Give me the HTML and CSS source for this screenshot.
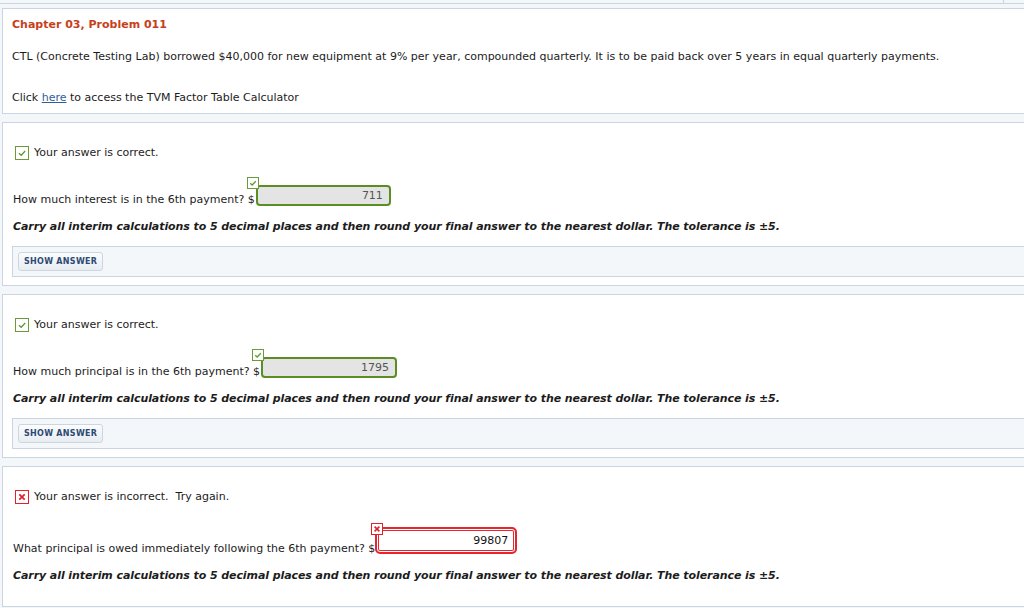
FILE: index.html
```html
<!DOCTYPE html>
<html>
<head>
<meta charset="utf-8">
<link rel="stylesheet" href="styles.css">
</head>
<body>
<div class="topbar"><span class="topbar-tab"></span></div>
<div class="page">
  <section class="box intro">
    <h1 class="title">Chapter 03, Problem 011</h1>
    <p class="problem">CTL (Concrete Testing Lab) borrowed $40,000 for new equipment at 9% per year, compounded quarterly. It is to be paid back over 5 years in equal quarterly payments.</p>
    <p class="calc">Click <a href="#" class="link">here</a> to access the TVM Factor Table Calculator</p>
  </section>

  <section class="box part">
    <div class="status">
      <span class="mark ok"><svg viewBox="0 0 14 14" width="14" height="14"><path d="M4 7.2 L6.2 9.3 L10.2 5" fill="none" stroke="#5e9a2c" stroke-width="1.3"/></svg></span>
      <span>Your answer is correct.</span>
    </div>
    <div class="question">
      <span>How much interest is in the 6th payment? $</span>
      <span class="field ok w1">
        <span class="badge ok"><svg viewBox="0 0 12 12" width="12" height="12"><path d="M3.2 6.2 L5.2 8 L8.8 4.3" fill="none" stroke="#5e9a2c" stroke-width="1.3"/></svg></span>
        <span class="value">711</span>
      </span>
    </div>
    <p class="note">Carry all interim calculations to 5 decimal places and then round your final answer to the nearest dollar. The tolerance is ±5.</p>
    <div class="answer-bar"><button class="show">SHOW ANSWER</button></div>
  </section>

  <section class="box part">
    <div class="status">
      <span class="mark ok"><svg viewBox="0 0 14 14" width="14" height="14"><path d="M4 7.2 L6.2 9.3 L10.2 5" fill="none" stroke="#5e9a2c" stroke-width="1.3"/></svg></span>
      <span>Your answer is correct.</span>
    </div>
    <div class="question">
      <span>How much principal is in the 6th payment? $</span>
      <span class="field ok w2">
        <span class="badge ok"><svg viewBox="0 0 12 12" width="12" height="12"><path d="M3.2 6.2 L5.2 8 L8.8 4.3" fill="none" stroke="#5e9a2c" stroke-width="1.3"/></svg></span>
        <span class="value">1795</span>
      </span>
    </div>
    <p class="note">Carry all interim calculations to 5 decimal places and then round your final answer to the nearest dollar. The tolerance is ±5.</p>
    <div class="answer-bar"><button class="show">SHOW ANSWER</button></div>
  </section>

  <section class="box part last">
    <div class="status">
      <span class="mark bad"><svg viewBox="0 0 14 14" width="14" height="14"><path d="M4.3 4.3 L9.7 9.7 M9.7 4.3 L4.3 9.7" fill="none" stroke="#e0232b" stroke-width="1.8"/></svg></span>
      <span>Your answer is incorrect.&nbsp; Try again.</span>
    </div>
    <div class="question">
      <span>What principal is owed immediately following the 6th payment? $</span>
      <span class="field bad w3">
        <span class="badge bad"><svg viewBox="0 0 12 12" width="12" height="12"><path d="M3.6 3.6 L8.4 8.4 M8.4 3.6 L3.6 8.4" fill="none" stroke="#e0232b" stroke-width="1.6"/></svg></span>
        <span class="value">99807</span>
      </span>
    </div>
    <p class="note">Carry all interim calculations to 5 decimal places and then round your final answer to the nearest dollar. The tolerance is ±5.</p>
  </section>
</div>
</body>
</html>
```

FILE: styles.css
```css
html, body {
  margin: 0;
  padding: 0;
}
body {
  background: #f4f7fa;
  font-family: Verdana, "DejaVu Sans", sans-serif;
  font-size: 11px;
  line-height: 14px;
  color: #1c1c1c;
  overflow: hidden;
  width: 1024px;
  height: 608px;
}
.topbar {
  height: 3px;
  border-bottom: 1px solid #c9d5e3;
  position: relative;
}
.topbar-tab {
  position: absolute;
  left: 1003px;
  top: 0;
  width: 0;
  height: 3px;
  border-left: 1px solid #c9d5e3;
}
.page {
  display: flex;
  flex-direction: column;
  gap: 8px;
  padding: 4px 0 0 2px;
}
.box {
  background: #fff;
  border: 1px solid #c9d5e3;
  width: 1040px;
  box-sizing: border-box;
  padding: 0 0 0 9px;
}
.intro {
  padding-top: 9px;
  padding-bottom: 8px;
}
.title {
  margin: 0;
  font-size: 11px;
  line-height: 14px;
  font-weight: bold;
  color: #c8401a;
}
.problem {
  margin: 18px 0 0;
}
.calc {
  margin: 27px 0 0;
}
.link {
  color: #2f5f98;
  text-decoration: underline;
}
.part {
  padding-top: 23px;
  padding-bottom: 8px;
}
.part.last {
  padding-top: 23px;
  padding-bottom: 23px;
}
.status {
  display: flex;
  align-items: center;
  gap: 5px;
  padding-left: 3px;
  height: 14px;
}
.mark {
  display: inline-block;
  width: 14px;
  height: 14px;
  box-sizing: border-box;
  position: relative;
}
.mark svg {
  display: block;
  position: absolute;
  left: -1px;
  top: -1px;
}
.mark.ok {
  border: 1px solid #6b9a3a;
}
.mark.bad {
  border: 1px solid #e0232b;
}
.question {
  display: flex;
  align-items: flex-end;
  margin-top: 25px;
  padding-left: 1px;
}
.last .question {
  margin-top: 23px;
}
.field {
  position: relative;
  display: flex;
  align-items: center;
  justify-content: flex-end;
  box-sizing: border-box;
  font-size: 11px;
}
.field.ok {
  height: 21px;
  border: 2px solid #5a8e22;
  border-radius: 4px;
  background: #e4e4e4;
  color: #555;
  padding-right: 6px;
  margin-bottom: 1px;
  margin-left: 1px;
}
.field.w1 { width: 135px; }
.field.w2 { width: 136px; }
.field.bad {
  height: 27px;
  border: 2px solid #e5262e;
  border-radius: 5px;
  background: #fff;
  box-shadow: inset 0 0 0 1px #fff, inset 0 0 0 2px #e5262e;
  color: #111;
  padding-right: 7px;
  margin-bottom: 2px;
}
.field.w3 { width: 142px; }
.badge {
  position: absolute;
  width: 12px;
  height: 12px;
  box-sizing: border-box;
  background: #fff;
}
.badge svg {
  display: block;
  position: absolute;
  left: -1px;
  top: -1px;
}
.badge.ok {
  border: 1px solid #6b9a3a;
  left: -11px;
  top: -10px;
}
.badge.bad {
  border: 1px solid #e0232b;
  left: -6px;
  top: -6px;
}
.note {
  margin: 13px 0 0;
  font-weight: bold;
  font-style: italic;
  letter-spacing: -0.08px;
  padding-left: 1px;
}
.answer-bar {
  margin-top: 12px;
  background: #f4f7fa;
  border: 1px solid #c9d5e3;
  padding: 5px;
  display: flex;
}
.show {
  font-family: Verdana, "DejaVu Sans", sans-serif;
  font-size: 8px;
  font-weight: bold;
  letter-spacing: 0.3px;
  color: #2d4a74;
  height: 19px;
  padding: 0 5px;
  border: 1px solid #cdd6df;
  border-radius: 3px;
  background: linear-gradient(#fbfcfd, #e8edf2);
  cursor: pointer;
}
```
